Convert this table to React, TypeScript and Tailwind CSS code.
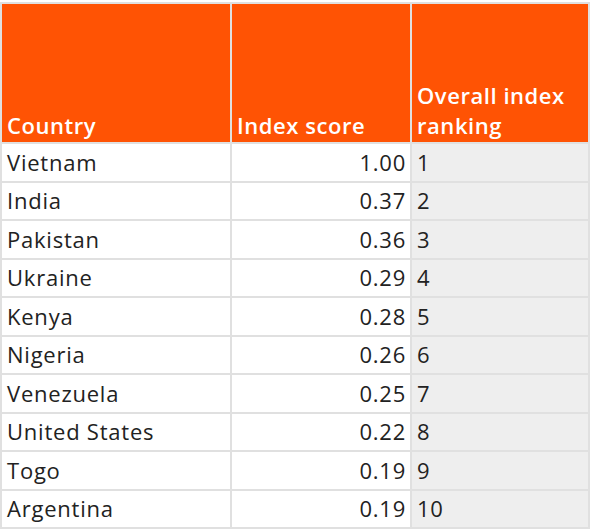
const rows: [string, string, string][] = [
  ["Vietnam", "1.00", "1"],
  ["India", "0.37", "2"],
  ["Pakistan", "0.36", "3"],
  ["Ukraine", "0.29", "4"],
  ["Kenya", "0.28", "5"],
  ["Nigeria", "0.26", "6"],
  ["Venezuela", "0.25", "7"],
  ["United States", "0.22", "8"],
  ["Togo", "0.19", "9"],
  ["Argentina", "0.19", "10"],
];

const App = () => {
  return (
    <div className="w-[590px] h-[529px] bg-white pt-[2px] font-['Open_Sans',sans-serif] text-[22px] tracking-[0.035em] text-[#222]">
      <div className="grid grid-cols-[228px_178px_176px] gap-[2px] p-[2px] bg-[#e0e0e0] w-[590px]">
        <div className="h-[138px] bg-[#ff5304] text-white font-semibold tracking-[0.025em] flex items-end px-[5px] pb-[2px] leading-[30px]">
          Country
        </div>
        <div className="h-[138px] bg-[#ff5304] text-white font-semibold tracking-[0.025em] flex items-end px-[5px] pb-[2px] leading-[30px]">
          Index score
        </div>
        <div className="h-[138px] bg-[#ff5304] text-white font-semibold tracking-[0.025em] flex items-end px-[5px] pb-[2px] leading-[30px]">
          Overall index ranking
        </div>
        {rows.map(([country, score, rank]) => (
          <>
            <div key={country + "c"} className="h-[36.5px] bg-white flex items-center px-[5px]">
              {country}
            </div>
            <div key={country + "s"} className="h-[36.5px] bg-white flex items-center justify-end px-[4px]">
              {score}
            </div>
            <div key={country + "r"} className="h-[36.5px] bg-[#eeeeee] flex items-center px-[5px]">
              {rank}
            </div>
          </>
        ))}
      </div>
    </div>
  );
};

export default App;
